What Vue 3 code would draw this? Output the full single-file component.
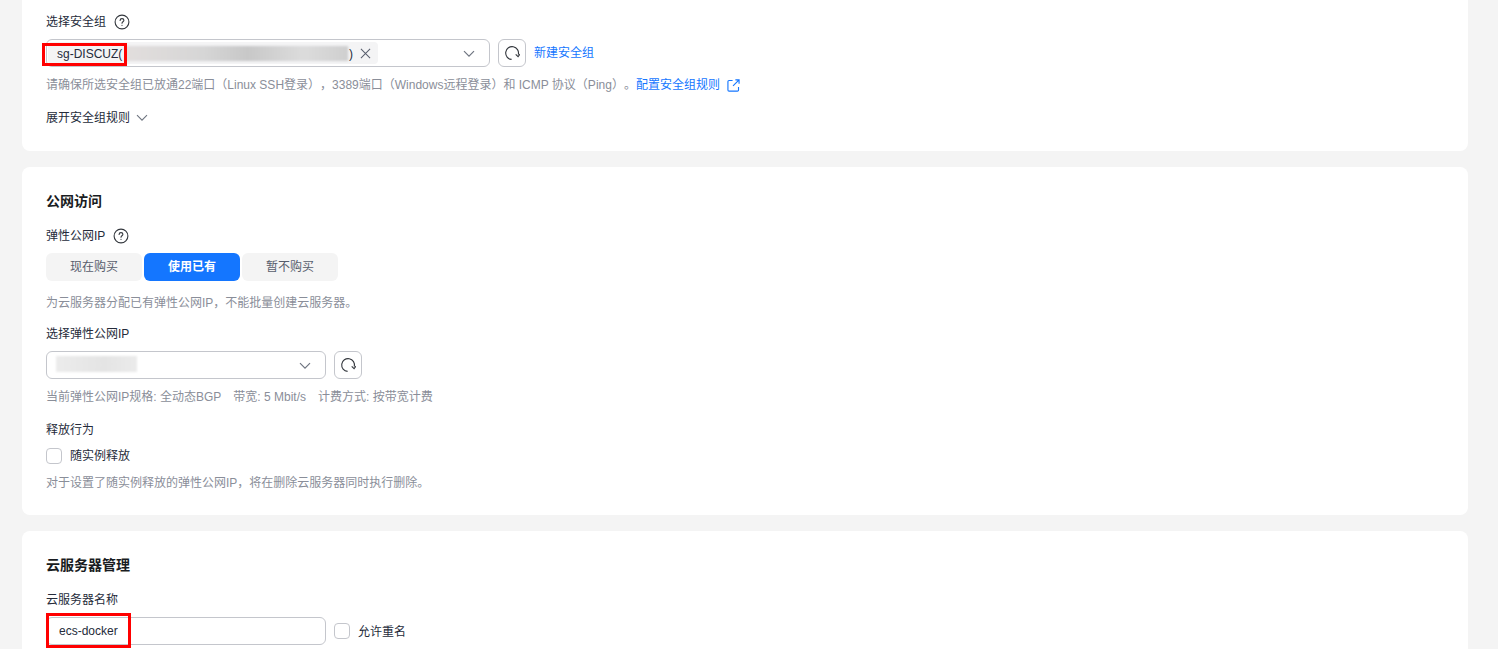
<script setup>
const segments = [
  { label: '现在购买', active: false },
  { label: '使用已有', active: true },
  { label: '暂不购买', active: false },
]
</script>

<template>
  <div class="page">
    <section class="card card-first">
      <div class="label first-label">
        <span>选择安全组</span>
        <svg class="help" viewBox="0 0 16 16" fill="none" stroke="#33373d" stroke-width="1.1">
          <circle cx="8" cy="8" r="6.9" />
          <path d="M6.1 6.4c0-1.100.9-1.800 1.900-1.800s1.900.7 1.900 1.700c0 1.500-1.900 1.500-1.900 3" stroke-linecap="round" />
          <circle cx="8" cy="11.300" r=".6" fill="#33373d" stroke="none" />
        </svg>
      </div>
      <div class="field-row">
        <div class="select select-wide">
          <div class="tag">
            <span class="tag-text">sg-DISCUZ(</span>
            <span class="smudge smudge-tag"></span>
            <span class="tag-end">)</span>
            <svg class="tag-close" viewBox="0 0 12 12" fill="none" stroke="#575d6c" stroke-width="1.1">
              <path d="M1 1l10 10M11 1L1 11" />
            </svg>
          </div>
          <svg class="chevron" viewBox="0 0 12 8" fill="none" stroke="#6f7580" stroke-width="1.2">
            <path d="M1 1.200l5 5 5-5" />
          </svg>
          <span class="mark mark-group"></span>
        </div>
        <button class="refresh" aria-label="刷新">
          <svg viewBox="0 0 16 16" fill="none" stroke="#33373d" stroke-width="1.1">
            <path d="M7.600 14.400A6.400 6.400 0 1 1 14.300 9.600" />
            <path d="M11.700 9.300l2.400 2.300 2-2.500" />
          </svg>
        </button>
        <a class="link">新建安全组</a>
      </div>
      <p class="hint hint-first">
        请确保所选安全组已放通22端口（Linux SSH登录），3389端口（Windows远程登录）和 ICMP 协议（Ping）。<a class="link">配置安全组规则</a>
        <svg class="external" viewBox="0 0 14 14" fill="none" stroke="#1476ff" stroke-width="1.2">
          <path d="M6 1.600H2.200a1.200 1.200 0 0 0-1.200 1.200v9a1.200 1.200 0 0 0 1.200 1.200h9a1.200 1.200 0 0 0 1.200-1.200V8.500" />
          <path d="M6.500 7.500L13 1M9 1h4v4" />
        </svg>
      </p>
      <div class="label expand">
        <span>展开安全组规则</span>
        <svg class="expand-chevron" viewBox="0 0 12 8" fill="none" stroke="#6f7580" stroke-width="1.1">
          <path d="M1 1.200l5 5 5-5" />
        </svg>
      </div>
    </section>

    <section class="card card-network">
      <h2 class="title">公网访问</h2>
      <div class="label eip-label">
        <span>弹性公网IP</span>
        <svg class="help" viewBox="0 0 16 16" fill="none" stroke="#33373d" stroke-width="1.1">
          <circle cx="8" cy="8" r="6.900" />
          <path d="M6.100 6.400c0-1.100.9-1.800 1.900-1.800s1.900.7 1.900 1.700c0 1.500-1.900 1.500-1.900 3" stroke-linecap="round" />
          <circle cx="8" cy="11.300" r=".6" fill="#33373d" stroke="none" />
        </svg>
      </div>
      <div class="segments">
        <button v-for="s in segments" :key="s.label" class="segment" :class="{ active: s.active }">{{ s.label }}</button>
      </div>
      <p class="hint hint-segment">为云服务器分配已有弹性公网IP，不能批量创建云服务器。</p>
      <div class="label select-label">选择弹性公网IP</div>
      <div class="field-row">
        <div class="select select-narrow">
          <span class="smudge smudge-ip"></span>
          <svg class="chevron" viewBox="0 0 12 8" fill="none" stroke="#6f7580" stroke-width="1.2">
            <path d="M1 1.200l5 5 5-5" />
          </svg>
        </div>
        <button class="refresh" aria-label="刷新">
          <svg viewBox="0 0 16 16" fill="none" stroke="#33373d" stroke-width="1.1">
            <path d="M7.600 14.400A6.400 6.400 0 1 1 14.300 9.600" />
            <path d="M11.700 9.300l2.400 2.300 2-2.500" />
          </svg>
        </button>
      </div>
      <p class="hint hint-spec">当前弹性公网IP规格: 全动态BGP<span class="gap"></span>带宽: 5 Mbit/s<span class="gap"></span>计费方式: 按带宽计费</p>
      <div class="label release-label">释放行为</div>
      <label class="check">
        <span class="box"></span>
        <span>随实例释放</span>
      </label>
      <p class="hint hint-release">对于设置了随实例释放的弹性公网IP，将在删除云服务器同时执行删除。</p>
    </section>

    <section class="card card-manage">
      <h2 class="title">云服务器管理</h2>
      <div class="label name-label">云服务器名称</div>
      <div class="field-row">
        <div class="select select-narrow name-input">
          <span>ecs-docker</span>
          <span class="mark mark-name"></span>
        </div>
        <label class="check check-low">
          <span class="box"></span>
          <span class="check-text">允许重名</span>
        </label>
      </div>
    </section>
  </div>
</template>

<style>
html, body { margin: 0; background: #f4f4f4; overflow: hidden; }
</style>

<style scoped>
.page {
  height: 649px;
  overflow: hidden;
  padding: 0 30px 0 22px;
  background: #f4f4f4;
  font: 12px/18px "Liberation Sans", "Noto Sans CJK SC", sans-serif;
  text-spacing-trim: space-all;
  color: #252b3a;
  box-sizing: border-box;
}
.card {
  background: #fff;
  border-radius: 8px;
  padding: 0 24px;
  margin-bottom: 16px;
  box-sizing: border-box;
}
.card-first { height: 161px; margin-top: -10px; padding-top: 23px; }
.card-network { height: 348px; padding-top: 25px; }
.card-manage { height: 140px; padding-top: 25px; }
.title { margin: 0; font-size: 14px; line-height: 18px; font-weight: 700; color: #191c21; }
.label { display: flex; align-items: center; height: 18px; }
.help { width: 16px; height: 16px; margin-left: 8px; }
.field-row { display: flex; align-items: center; gap: 8px; }
.first-label { margin-bottom: 8px; }
.select {
  position: relative;
  display: flex;
  align-items: center;
  height: 28px;
  box-sizing: border-box;
  border: 1px solid #c4c6cc;
  border-radius: 6px;
  background: #fff;
}
.select-wide { width: 444px; }
.select-narrow { width: 280px; }
.tag {
  display: flex;
  align-items: center;
  width: 330px;
  height: 22px;
  margin-left: 1px;
  padding-left: 9px;
  box-sizing: border-box;
  background: #f4f4f5;
  border-radius: 4px;
  white-space: nowrap;
}
.tag-text { width: 68px; padding-top: 1px; }
.tag-end { margin-left: 1px; padding-top: 1px; }
.tag-close { width: 11px; height: 11px; margin-left: 7px; }
.smudge {
  display: block;
  background: linear-gradient(90deg, #e2dedd, #d6d6d6 35%, #c8c8c8 55%, #dcdcdc 80%, #cfcfcf);
  filter: blur(1px);
}
.smudge-tag { width: 223px; height: 15px; }
.smudge-ip {
  width: 81px;
  height: 16px;
  margin: -3px 0 0 9px;
  background: linear-gradient(90deg, #ececec, #e4e4e4 60%, #ebebeb);
}
.chevron { position: absolute; right: 14px; top: 10px; width: 12px; height: 8px; }
.refresh {
  display: flex;
  align-items: center;
  justify-content: center;
  width: 28px;
  height: 28px;
  padding: 0;
  border: 1px solid #c4c6cc;
  border-radius: 6px;
  background: #fff;
}
.refresh svg { width: 16px; height: 16px; }
.link { color: #1476ff; }
.hint { margin: 0; color: #8a8e99; white-space: nowrap; }
.hint-first { display: flex; align-items: center; margin-top: 9px; }
.external { width: 13px; height: 13px; margin-left: 7px; }
.expand { margin-top: 15px; }
.expand-chevron { width: 12px; height: 8px; margin-left: 6px; }
.eip-label { margin-top: 17px; margin-bottom: 8px; }
.segments { display: flex; gap: 2px; }
.segment {
  width: 96px;
  height: 28px;
  padding: 0;
  border: 0;
  border-radius: 6px;
  background: #f4f4f4;
  color: #575d6c;
  font: inherit;
}
.segment.active { background: #1476ff; color: #fff; font-weight: 700; }
.hint-segment { margin-top: 13px; }
.select-label { margin-top: 13px; margin-bottom: 8px; }
.hint-spec { margin-top: 9px; }
.gap { display: inline-block; width: 12px; }
.release-label { margin-top: 15px; margin-bottom: 9px; }
.check { display: flex; align-items: center; gap: 8px; height: 16px; }
.check-text { padding-top: 1px; }
.box {
  width: 16px;
  height: 16px;
  box-sizing: border-box;
  border: 1px solid #c4c6cc;
  border-radius: 4px;
  background: #fff;
}
.hint-release { margin-top: 10px; }
.name-label { margin-top: 17px; margin-bottom: 8px; }
.name-input { padding-left: 12px; }
.mark { position: absolute; border: 3px solid #f00; box-sizing: border-box; pointer-events: none; }
.mark-group { left: -5px; top: 3px; width: 85px; height: 23px; }
.mark-name { left: -1px; top: -5px; width: 85px; height: 35px; }
</style>
